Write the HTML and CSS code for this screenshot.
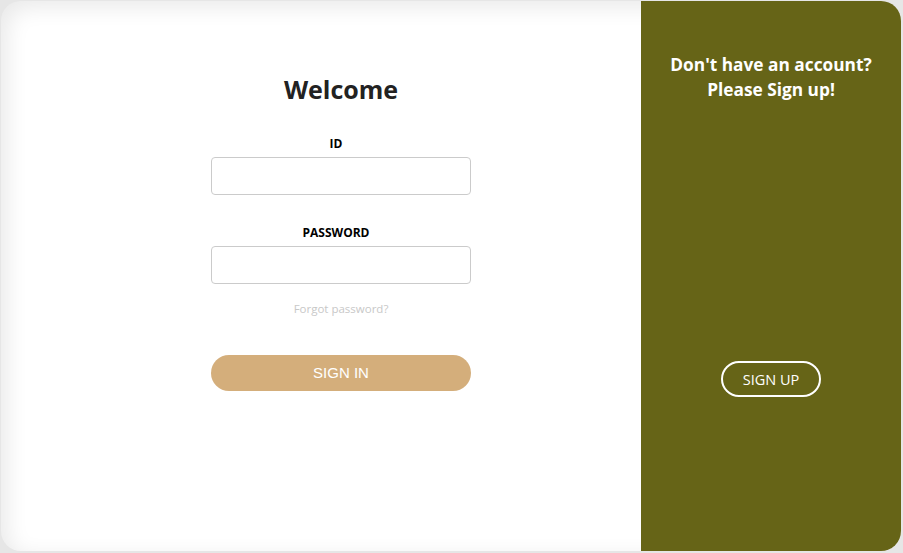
FILE: index.html
```html
<!DOCTYPE html>
<html lang="en">
<head>
<meta charset="utf-8">
<title>Login</title>
<link rel="stylesheet" href="styles.css">
</head>
<body>
<div class="card">
  <section class="signin">
    <form class="form">
      <h1 class="title">Welcome</h1>
      <label class="label" for="id">ID</label>
      <input class="input" id="id" type="text">
      <label class="label label-pw" for="pw">PASSWORD</label>
      <input class="input" id="pw" type="password">
      <a class="forgot" href="#">Forgot password?</a>
      <button class="btn-signin" type="button">SIGN IN</button>
    </form>
  </section>
  <section class="signup">
    <h2 class="signup-title">Don't have an account?<br>Please Sign up!</h2>
    <button class="btn-signup" type="button">SIGN UP</button>
  </section>
</div>
</body>
</html>
```
FILE: styles.css
```css
* { box-sizing: border-box; }
html, body { margin: 0; padding: 0; }
body {
  background: #e6e6e6;
  font-family: "Open Sans", "Noto Sans", sans-serif;
  width: 903px;
  height: 553px;
  padding: 1px 2px 2px 1px;
}
.card {
  display: flex;
  width: 900px;
  height: 550px;
  border-radius: 20px;
  overflow: hidden;
  background: #fff;
  box-shadow: inset 6px 6px 22px rgba(0,0,0,0.09);
}
.signin {
  width: 640px;
  display: flex;
  justify-content: center;
  padding-left: 40px;
}
.form {
  width: 260px;
  display: flex;
  flex-direction: column;
  align-items: center;
  padding-top: 71px;
}
.title {
  margin: 0;
  font-size: 25px;
  font-weight: 700;
  color: #222;
  line-height: 34px;
}
.label {
  margin-top: 30px;
  padding-right: 10px;
  font-size: 12px;
  font-weight: 700;
  color: #000;
  line-height: 16px;
}
.label-pw { margin-top: 30px; }
.input {
  margin-top: 5px;
  width: 260px;
  height: 38px;
  border: 1px solid #cbcbcb;
  border-radius: 4px;
  background: #fff;
  outline: none;
}
.forgot {
  margin-top: 17px;
  font-size: 11.5px;
  color: #c8c8c8;
  text-decoration: none;
  line-height: 16px;
}
.btn-signin {
  margin-top: 38px;
  width: 260px;
  height: 36px;
  border: none;
  border-radius: 18px;
  background: #d4ae7b;
  color: #fff;
  font-family: "Liberation Sans", Arial, sans-serif;
  font-size: 15px;
  padding-bottom: 2px;
  cursor: pointer;
}
.signup {
  flex: 1;
  background: #666417;
  display: flex;
  flex-direction: column;
  align-items: center;
  padding-top: 51px;
}
.signup-title {
  margin: 0;
  color: #fff;
  font-size: 17.3px;
  font-weight: 700;
  line-height: 25px;
  text-align: center;
}
.btn-signup {
  margin-top: 259px;
  width: 100px;
  height: 36px;
  border: 2px solid #fff;
  border-radius: 18px;
  background: transparent;
  color: #fff;
  font-family: "Open Sans", sans-serif;
  font-size: 14.5px;
  cursor: pointer;
}
```
